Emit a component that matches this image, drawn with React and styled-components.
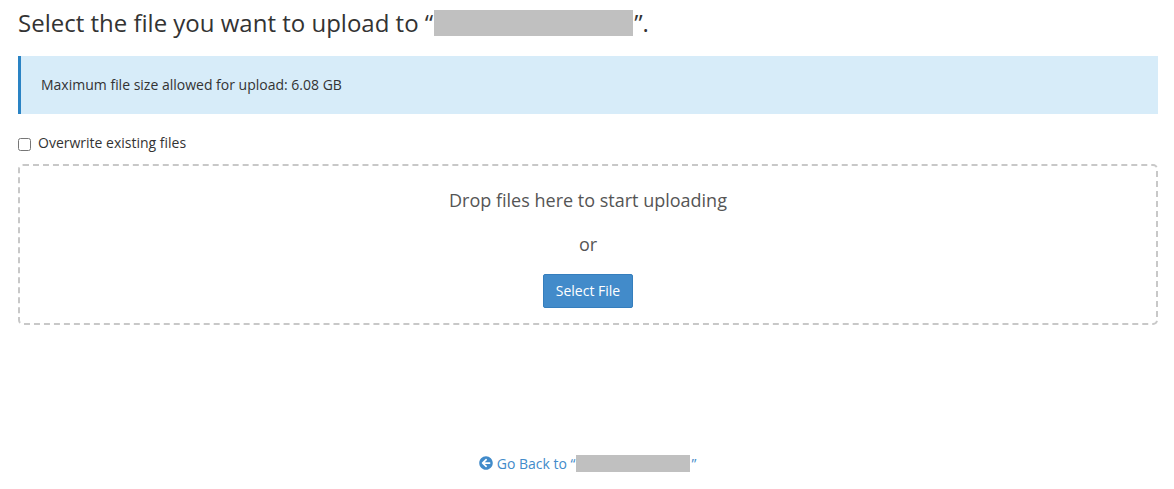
import React from "react";
import styled, { createGlobalStyle } from "styled-components";
import { FaArrowCircleLeft } from "react-icons/fa";

const Global = createGlobalStyle`
  html, body { margin: 0; padding: 0; background: #fff; }
  body { font-family: "Open Sans", "Liberation Sans", sans-serif; font-size: 14px; color: #333; }
`;

const Page = styled.main`
  padding: 0 16px 0 18px;
  display: flex;
  flex-direction: column;
`;

const Title = styled.h1`
  margin: 6px 0 0;
  height: 34px;
  display: flex;
  align-items: center;
  font-size: 24px;
  line-height: 34px;
  font-weight: 400;
  color: #333;
  white-space: pre;
`;

const Redacted = styled.span`
  display: inline-block;
  background: #c0c0c0;
  flex: none;
  width: ${(p) => p.$w}px;
  height: ${(p) => p.$h}px;
  margin: 0 ${(p) => p.$gap || 0}px;
`;

const Alert = styled.div`
  margin-top: 16px;
  height: 58px;
  box-sizing: border-box;
  display: flex;
  align-items: center;
  padding: 0 0 2px 20px;
  background: #d7ecf9;
  border-left: 3px solid #2a83c4;
  font-size: 14px;
  color: #333;
`;

const CheckRow = styled.label`
  margin-top: 18px;
  height: 20px;
  display: flex;
  align-items: center;
  font-size: 14px;
  color: #333;
`;

const Check = styled.input.attrs({ type: "checkbox" })`
  margin: 4px 7px 0 0;
  width: 13px;
  height: 13px;
`;

const Drop = styled.section`
  margin-top: 12px;
  height: 161px;
  box-sizing: border-box;
  border: 2px dashed #c8c8c8;
  border-radius: 5px;
  display: flex;
  flex-direction: column;
  align-items: center;
  color: #555;
  font-size: 18px;
`;

const DropLine = styled.div`
  line-height: 26px;
  margin-top: ${(p) => p.$top}px;
`;

const Button = styled.button`
  margin-top: 17px;
  height: 34px;
  width: 90px;
  padding: 0 0 2px;
  background: #428bca;
  border: 1px solid #357ebd;
  border-radius: 2px;
  color: #fff;
  font-family: inherit;
  font-size: 14px;
`;

const Back = styled.a`
  margin-top: 128px;
  height: 20px;
  padding-right: 1px;
  display: flex;
  align-items: center;
  justify-content: center;
  color: #428bca;
  font-size: 14px;
  text-decoration: none;
  white-space: pre;
`;

const BackIcon = styled(FaArrowCircleLeft)`
  width: 14px;
  height: 14px;
  margin-right: 4px;
  flex: none;
`;

export default function App() {
  return (
    <>
      <Global />
      <Page>
        <Title>
          Select the file you want to upload to “<Redacted $w={199} $h={26} $gap={1} />”.
        </Title>
        <Alert>Maximum file size allowed for upload: 6.08 GB</Alert>
        <CheckRow>
          <Check />
          Overwrite existing files
        </CheckRow>
        <Drop>
          <DropLine $top={21}>Drop files here to start uploading</DropLine>
          <DropLine $top={18}>or</DropLine>
          <Button>Select File</Button>
        </Drop>
        <Back href="#">
          <BackIcon />
          Go Back to “<Redacted $w={114} $h={17} $gap={1} />”
        </Back>
      </Page>
    </>
  );
}
